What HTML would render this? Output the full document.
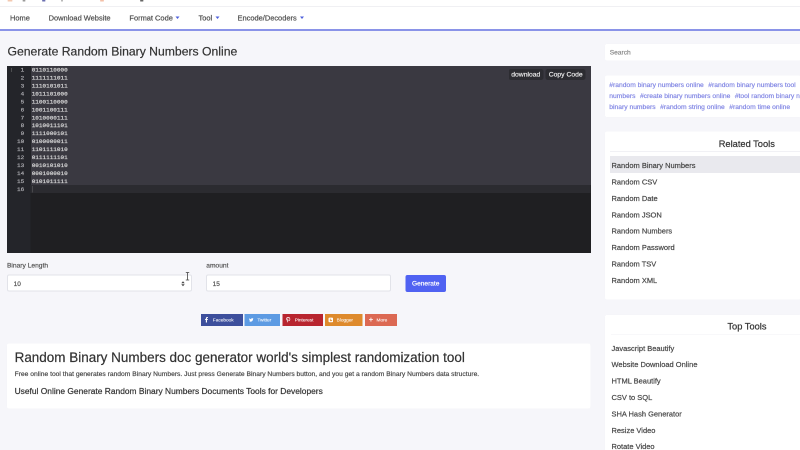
<!DOCTYPE html>
<html><head><meta charset="utf-8">
<style>
*{box-sizing:border-box;margin:0;padding:0}
html,body{width:800px;height:450px;overflow:hidden}
body{background:#f6f6fa;font-family:"Liberation Sans",sans-serif;color:#333;position:relative}
.abs{position:absolute;white-space:nowrap}
#topstrip{left:0;top:0;width:1600px;height:14.4px;background:#fff;border-bottom:1.6px solid #e2e2e8}
#nav{left:0;top:14.4px;width:1600px;height:47.6px;background:#fff;border-bottom:4px solid #8a93e8}
#nav span{position:absolute;top:14px;font-size:14.9px;color:#505050;white-space:nowrap}
#nav i{position:absolute;top:18.6px;width:0;height:0;border-left:4px solid transparent;border-right:4px solid transparent;border-top:5.6px solid #4e60dc}
#title{left:15px;top:88.6px;font-size:24.4px;color:#333}
#editor{left:14px;top:132px;width:1168px;height:374px;background:#1f1f22;font-family:"Liberation Mono",monospace;font-size:12px;overflow:hidden}
#gutter{left:0;top:0;width:46.6px;height:374px;background:#24252a}
.sel{position:absolute;left:48px;top:0;width:1120px;height:238px;background:#3a3941}
.act{position:absolute;left:46.6px;top:238px;width:1120px;height:16px;background:#2b2b30}
.gact{display:none}
.lines{position:absolute;left:0;top:1.2px;line-height:15.9px}
.ln{position:absolute;left:0;width:34.4px;text-align:right;color:#b0b0b5;transform:scaleY(0.84);transform-origin:0 60%}
.tx{position:absolute;left:49.4px;color:#dcdcdc;transform:scaleY(0.84);transform-origin:0 60%}
.ebtn{position:absolute;top:6px;height:22px;background:#2c2c31;border-radius:5px;color:#e8e8e8;font-family:"Liberation Sans",sans-serif;font-size:13.6px;line-height:22px;text-align:center}
.lbl{font-size:13.3px;color:#555}
.inp{background:#fff;border:2px solid #e2e3e9;border-radius:4px;height:34px;width:370px;font-size:13px;color:#555;padding:9.6px 0 0 11.2px}
.share{position:absolute;top:627.8px;height:24px;color:rgba(255,255,255,0.9);font-size:9.5px;line-height:24px;-webkit-text-stroke:0.2px}
.share b{position:absolute;font-weight:bold}
.card{position:absolute;background:#fff;border-radius:4px;box-shadow:0 0 2px rgba(0,0,0,0.03)}
.rt{font-size:18.6px;color:#333}
.item{position:absolute;left:13px;font-size:14.96px;color:#474747;white-space:nowrap}
.tags{position:absolute;left:8.6px;top:8.6px;width:800px;font-size:13.44px;line-height:21.8px;color:#8287e4;white-space:nowrap}
.tags i{font-style:normal;margin-right:9px}
</style></head><body><div id="root" style="position:absolute;left:0;top:0;width:1600px;height:900px;transform:scale(0.5);transform-origin:0 0;will-change:transform;-webkit-text-stroke:0.4px">
<div id="topstrip" class="abs">
<div class="abs" style="left:15px;top:0;width:10px;height:3px;background:#f3c9b0;border-radius:2px"></div>
<div class="abs" style="left:45px;top:0;width:6px;height:3px;background:#999;border-radius:2px"></div>
<div class="abs" style="left:84px;top:0;width:7px;height:3px;background:#6b6fb0;border-radius:2px"></div>
<div class="abs" style="left:122px;top:0;width:4px;height:3px;background:#aaa;border-radius:2px"></div>
<div class="abs" style="left:200px;top:0;width:8px;height:3px;background:#f3c0a8;border-radius:2px"></div>
<div class="abs" style="left:280px;top:0;width:7px;height:3px;background:#666;border-radius:2px"></div>
</div>
<div id="nav" class="abs">
  <span style="left:20px">Home</span>
  <span style="left:97.2px">Download Website</span>
  <span style="left:258.8px">Format Code</span><i style="left:351.4px"></i>
  <span style="left:397px">Tool</span><i style="left:431px"></i>
  <span style="left:475px">Encode/Decoders</span><i style="left:600.4px"></i>
</div>
<div id="title" class="abs">Generate Random Binary Numbers Online</div>

<div id="editor" class="abs">
  <div id="gutter" class="abs"></div>
  <div class="sel"></div>
  <div class="act"></div>
  <div class="gact"></div>
  <div class="abs" style="left:50.6px;top:240px;width:1.2px;height:13px;background:#666"></div>
  <div class="abs" style="left:8px;top:4.4px;width:1.4px;height:7.6px;background:#777"></div>
  <div class="lines">
    <div class="ln" style="top:0">1</div>
    <div class="ln" style="top:15.9px">2</div>
    <div class="ln" style="top:31.8px">3</div>
    <div class="ln" style="top:47.7px">4</div>
    <div class="ln" style="top:63.6px">5</div>
    <div class="ln" style="top:79.5px">6</div>
    <div class="ln" style="top:95.4px">7</div>
    <div class="ln" style="top:111.3px">8</div>
    <div class="ln" style="top:127.2px">9</div>
    <div class="ln" style="top:143.1px">10</div>
    <div class="ln" style="top:159px">11</div>
    <div class="ln" style="top:174.9px">12</div>
    <div class="ln" style="top:190.8px">13</div>
    <div class="ln" style="top:206.7px">14</div>
    <div class="ln" style="top:222.6px">15</div>
    <div class="ln" style="top:238.5px">16</div>
    <div class="tx" style="top:0">0110110000</div>
    <div class="tx" style="top:15.9px">1111111011</div>
    <div class="tx" style="top:31.8px">1110101011</div>
    <div class="tx" style="top:47.7px">1011101000</div>
    <div class="tx" style="top:63.6px">1100110000</div>
    <div class="tx" style="top:79.5px">1001100111</div>
    <div class="tx" style="top:95.4px">1010000111</div>
    <div class="tx" style="top:111.3px">1010011101</div>
    <div class="tx" style="top:127.2px">1111000101</div>
    <div class="tx" style="top:143.1px">0100000011</div>
    <div class="tx" style="top:159px">1101111010</div>
    <div class="tx" style="top:174.9px">0111111101</div>
    <div class="tx" style="top:190.8px">0010101010</div>
    <div class="tx" style="top:206.7px">0001000010</div>
    <div class="tx" style="top:222.6px">0101011111</div>
  </div>
  <div class="ebtn" style="left:1002.6px;width:70px">download</div>
  <div class="ebtn" style="left:1077.4px;width:80px">Copy Code</div>
</div>

<!-- form -->
<div class="abs lbl" style="left:14px;top:522.8px">Binary Length</div>
<div class="abs lbl" style="left:412.6px;top:522.8px">amount</div>
<div class="abs inp" style="left:14px;top:548.6px">10
  <svg style="position:absolute;left:345.6px;top:11px" width="8" height="11" viewBox="0 0 4 5.5"><path d="M0.3 2.3L2 0.2L3.7 2.3Z M0.3 3.2L2 5.3L3.7 3.2Z" fill="#444"/></svg>
</div>
<div class="abs inp" style="left:412px;top:548.6px">15</div>
<svg class="abs" style="left:371px;top:544px" width="8" height="17" viewBox="0 0 4 8.5"><path d="M0.3 0.5H3.7M2 0.5V8M0.3 8H3.7" stroke="#444" stroke-width="0.8" fill="none"/></svg>
<div class="abs" style="left:811.2px;top:549.8px;width:80.4px;height:34px;background:#5062f2;border-radius:4px;font-size:13.2px;color:#fff;text-align:center;line-height:34px">Generate</div>

<!-- share buttons -->
<div class="share" style="left:401.6px;width:84.6px;background:#3d4f9c"><svg style="position:absolute;left:8.6px;top:6.4px" width="6" height="11" viewBox="0 0 6 11"><path d="M1.7 11V6H0V4.2h1.7V2.8C1.7 1 2.7 0 4.4 0c.8 0 1.5.1 1.6.1v1.7H5c-.8 0-1 .4-1 1v1.4h2l-.3 1.8H4v5z" fill="#fff"/></svg><span style="position:absolute;left:24px">Facebook</span></div>
<div class="share" style="left:489.4px;width:70.6px;background:#5d9be3"><svg style="position:absolute;left:8.6px;top:8px" width="9" height="8" viewBox="0 0 24 20"><path d="M24 2.4c-.9.4-1.8.6-2.8.8 1-.6 1.8-1.6 2.2-2.7-1 .6-2 1-3.1 1.2C19.4.7 18.1 0 16.6 0c-2.7 0-4.9 2.2-4.9 4.9 0 .4 0 .8.1 1.1C7.7 5.8 4.1 3.9 1.7.9c-.4.7-.7 1.6-.7 2.5 0 1.7.9 3.2 2.2 4.1-.8 0-1.6-.2-2.2-.6v.1c0 2.4 1.7 4.4 3.9 4.8-.4.1-.8.2-1.3.2-.3 0-.6 0-.9-.1.6 2 2.4 3.4 4.6 3.4-1.7 1.3-3.8 2.1-6.1 2.1-.4 0-.8 0-1.2-.1 2.2 1.4 4.8 2.2 7.5 2.2 9.1 0 14-7.5 14-14v-.6c1-.7 1.8-1.6 2.5-2.5z" fill="#fff"/></svg><span style="position:absolute;left:25.4px">Twitter</span></div>
<div class="share" style="left:564.6px;width:81.6px;background:#b8252f"><svg style="position:absolute;left:7.6px;top:6.6px" width="9" height="11" viewBox="0 0 16 20"><path d="M8.5 0C3 0 0 3.6 0 7.5c0 1.8 1 4.100 2.500 4.800.2.1.4 0 .4-.2l.3-1.200c0-.1 0-.2-.1-.3C2.500 10 2.200 9 2.200 8 2.200 5.300 4.200 2.700 7.800 2.700c3 0 5.200 2.100 5.200 5 0 3.300-1.700 5.600-3.900 5.600-1.200 0-2.100-1-1.800-2.200.3-1.500 1-3 1-4.100 0-1-.5-1.700-1.500-1.700-1.200 0-2.200 1.200-2.200 2.900 0 1.100.4 1.800.4 1.800L3.500 16c-.4 1.700 0 4 .1 4.200 0 .1.200.2.300 0 .1-.2 1.700-2.200 2.200-3.900l.7-2.500c.4.700 1.500 1.300 2.600 1.300 3.400 0 5.800-3.100 5.800-7C15.200 2.900 12.300 0 8.500 0z" fill="#fff"/></svg><span style="position:absolute;left:24.8px">Pinterest</span></div>
<div class="share" style="left:650px;width:75px;background:#de8a2c"><svg style="position:absolute;left:7.2px;top:7.2px" width="9.2" height="9.6" viewBox="0 0 10 10"><rect x="0" y="0" width="10" height="10" rx="2.2" fill="#fff"/><path d="M3 2.4h2.2a1 1 0 0 1 0 2H3zM3 5.4h3.8a1.1 1.1 0 0 1 0 2.2H3z" fill="#de8a2c"/></svg><span style="position:absolute;left:23.2px">Blogger</span></div>
<div class="share" style="left:730.2px;width:63.8px;background:#dc6953"><b style="left:7.2px;font-size:15px;top:-0.6px">+</b><span style="position:absolute;left:22.8px">More</span></div>

<!-- bottom card -->
<div class="card" style="left:14.4px;top:687px;width:1166.4px;height:129.6px">
  <div class="abs" style="left:14.8px;top:12.7px;font-size:26.94px;color:#333">Random Binary Numbers doc generator world's simplest randomization tool</div>
  <div class="abs" style="left:14.8px;top:53.2px;font-size:13.44px;color:#4a4a4a">Free online tool that generates random Binary Numbers. Just press Generate Binary Numbers button, and you get a random Binary Numbers data structure.</div>
  <div class="abs" style="left:14.8px;top:86.4px;font-size:16.82px;color:#333">Useful Online Generate Random Binary Numbers Documents Tools for Developers</div>
</div>

<!-- sidebar -->
<div class="card" style="left:1209.8px;top:88.2px;width:392px;height:33px">
  <div class="abs" style="left:9.6px;top:9px;font-size:13.26px;color:#8a8a8a">Search</div>
</div>
<div class="card" style="left:1210px;top:150.6px;width:392px;height:83px;overflow:hidden">
  <div class="tags">
    <div><i>#random binary numbers online</i><i>#random binary numbers tool</i></div>
    <div><i>numbers</i><i>#create binary numbers online</i><i>#tool random binary numbers</i></div>
    <div><i>binary numbers</i><i>#random string online</i><i>#random time online</i></div>
  </div>
</div>
<div class="card" style="left:1210px;top:263.4px;width:392px;height:335.6px">
  <div class="abs rt" style="left:227.4px;top:14px">Related Tools</div>
  <div class="abs" style="left:10px;top:39px;width:382px;height:1.2px;background:#f1f1f5"></div>
  <div class="abs" style="left:9px;top:49px;width:384px;height:33.6px;background:#e9e9ee"></div>
  <div class="item" style="top:58.8px">Random Binary Numbers</div>
  <div class="item" style="top:91.6px">Random CSV</div>
  <div class="item" style="top:124.4px">Random Date</div>
  <div class="item" style="top:157.2px">Random JSON</div>
  <div class="item" style="top:190px">Random Numbers</div>
  <div class="item" style="top:222.8px">Random Password</div>
  <div class="item" style="top:255.6px">Random TSV</div>
  <div class="item" style="top:288.4px">Random XML</div>
</div>
<div class="card" style="left:1210px;top:630px;width:392px;height:280px">
  <div class="abs rt" style="left:244.8px;top:12.2px">Top Tools</div>
  <div class="abs" style="left:12px;top:38.8px;width:380px;height:1.2px;background:#f1f1f5"></div>
  <div class="item" style="top:57.6px">Javascript Beautify</div>
  <div class="item" style="top:90.4px">Website Download Online</div>
  <div class="item" style="top:123.2px">HTML Beautify</div>
  <div class="item" style="top:156px">CSV to SQL</div>
  <div class="item" style="top:188.8px">SHA Hash Generator</div>
  <div class="item" style="top:221.6px">Resize Video</div>
  <div class="item" style="top:254.4px">Rotate Video</div>
</div>
</div></body></html>
